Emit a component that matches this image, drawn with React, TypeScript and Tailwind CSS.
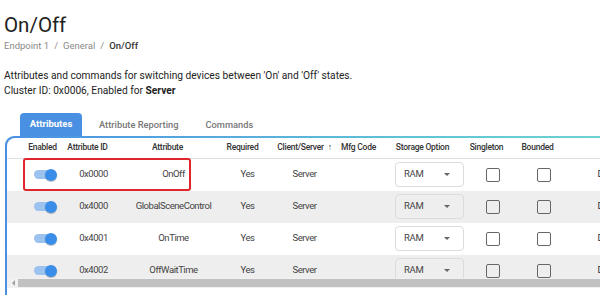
import React from "react";

const rows = [
  { id: "0x0000", name: "OnOff", bg: "bg-white" },
  { id: "0x4000", name: "GlobalSceneControl", bg: "bg-[#eeeeee]" },
  { id: "0x4001", name: "OnTime", bg: "bg-white" },
  { id: "0x4002", name: "OffWaitTime", bg: "bg-[#eeeeee]" },
];

function Toggle() {
  return (
    <div className="relative w-[23px] h-[12px] flex items-center">
      <div className="w-[21px] h-[9px] rounded-full bg-[#9cc3f0]" />
      <div className="absolute right-0 top-0 w-[12px] h-[12px] rounded-full bg-[#3a8de8] shadow-[0_1px_1px_rgba(0,0,0,0.25)]" />
    </div>
  );
}

function Select() {
  return (
    <div className="w-[69px] h-[25px] border border-[#dcdcdc] rounded-[4px] flex items-center justify-between pl-[8px] pr-[13px]">
      <span className="text-[9.5px] tracking-[-0.3px] text-[#444]">RAM</span>
      <span className="w-0 h-0 border-l-[3.5px] border-r-[3.5px] border-t-[3.5px] border-l-transparent border-r-transparent border-t-[#666]" />
    </div>
  );
}

function Check() {
  return <div className="w-[14px] h-[14px] border-[1.5px] border-[#666] rounded-[2px]" />;
}

const cell = "shrink-0 text-center whitespace-nowrap";

export default function App() {
  return (
    <div className="w-[600px] h-[295px] overflow-hidden bg-white font-['Roboto',sans-serif] text-[#222]">
      <div className="pl-[4px] pt-[11px]">
        <h1 className="text-[20.5px] leading-[28px] font-normal text-[#222]">On/Off</h1>
        <div className="text-[9.5px] leading-[14px] text-[#8a8a8a] flex gap-[5px]">
          <span>Endpoint 1</span>
          <span>/</span>
          <span>General</span>
          <span>/</span>
          <span className="text-[#333] font-medium">On/Off</span>
        </div>
        <div className="mt-[15px] text-[10.2px] leading-[15px] text-[#222]">
          <div>Attributes and commands for switching devices between 'On' and 'Off' states.</div>
          <div>
            Cluster ID: 0x0006, Enabled for <span className="font-bold">Server</span>
          </div>
        </div>
      </div>

      <div className="mt-[15px] flex items-end h-[23px] pl-[20px]">
        <div className="h-[23px] w-[62px] rounded-t-[4px] bg-[#4a90e2] text-white text-[9.5px] font-bold flex items-center justify-center">
          Attributes
        </div>
        <div className="h-[23px] ml-[17px] text-[9.3px] font-medium text-[#777] flex items-center">Attribute Reporting</div>
        <div className="h-[23px] ml-[27px] text-[9.3px] font-medium text-[#777] flex items-center">Commands</div>
      </div>

      <div className="ml-[5px] w-[620px] rounded-tl-[9px] bg-[linear-gradient(to_right,#4a90e2,#62c6d6_70%,#70d4cf)] pt-[1.5px] pl-[1.5px]">
        <div className="bg-white rounded-tl-[8px]">
          <div className="relative h-[140px] overflow-hidden">
            <div className="flex h-[21px] border-b border-[#e0e0e0] items-center text-[8.5px] tracking-[-0.25px] font-medium text-[#333]">
              <div className="w-[16px] shrink-0" />
              <div className={`w-[40px] ${cell}`}>Enabled</div>
              <div className={`w-[62px] ${cell} pr-[12px]`}>Attribute ID</div>
              <div className={`w-[98px] ${cell} pr-[12px]`}>Attribute</div>
              <div className={`w-[50px] ${cell} pr-[10px]`}>Required</div>
              <div className={`w-[64px] ${cell}`}>
                Client/Server <span className="ml-[2px]">↑</span>
              </div>
              <div className={`w-[48px] ${cell} pr-[4px]`}>Mfg Code</div>
              <div className={`w-[90px] ${cell} pr-[14px]`}>Storage Option</div>
              <div className={`w-[36px] ${cell} pr-[12px]`}>
                <span className="inline-block w-[36px] -ml-[6px]">Singleton</span>
              </div>
              <div className={`w-[66px] ${cell} pr-[12px]`}>Bounded</div>
            </div>
            {rows.map((r) => (
              <div key={r.id} className={`flex h-[32px] items-center text-[9.5px] tracking-[-0.45px] text-[#444] ${r.bg}`}>
                <div className="w-[16px] shrink-0" />
                <div className="w-[40px] shrink-0 flex justify-center pl-[6px]">
                  <Toggle />
                </div>
                <div className={`w-[62px] ${cell}`}>{r.id}</div>
                <div className={`w-[98px] ${cell}`}>{r.name}</div>
                <div className={`w-[50px] ${cell}`}>Yes</div>
                <div className={`w-[64px] ${cell}`}>Server</div>
                <div className="w-[48px] shrink-0" />
                <div className="w-[90px] shrink-0 flex justify-center">
                  <Select />
                </div>
                <div className="w-[36px] shrink-0 flex justify-center">
                  <Check />
                </div>
                <div className="w-[66px] shrink-0 flex justify-center">
                  <Check />
                </div>
                <div className="w-[100px] shrink-0 pl-[21px] text-[#333]">Default</div>
              </div>
            ))}
            <div className="absolute left-[16px] top-[20px] w-[168px] h-[33px] border-2 border-[#e0262b] rounded-[3px]" />
          </div>
          <div className="h-[10px] bg-[#f1f1f1] flex items-center">
            <div className="w-[11px] flex justify-center pl-[3px]">
              <span className="w-0 h-0 border-t-[3px] border-b-[3px] border-r-[3px] border-t-transparent border-b-transparent border-r-[#a0a0a0]" />
            </div>
            <div className="flex-1 h-[8px] bg-[#c1c1c1]" />
          </div>
          <div className="h-[20px]" />
        </div>
      </div>
    </div>
  );
}
